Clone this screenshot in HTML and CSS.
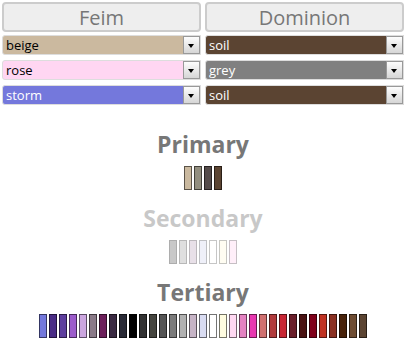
FILE: index.html
```html
<!DOCTYPE html>
<html lang="en">
<head>
  <meta charset="UTF-8">
  <title>Palette</title>
  <link rel="stylesheet" href="styles.css">
</head>
<body>
  <div class="teams">
    <div class="team">
      <button class="team-name">Feim</button>
      <div class="pick beige"><span>beige</span><i class="arrow"></i></div>
      <div class="pick rose"><span>rose</span><i class="arrow"></i></div>
      <div class="pick storm light"><span>storm</span><i class="arrow"></i></div>
    </div>
    <div class="team">
      <button class="team-name">Dominion</button>
      <div class="pick soil light"><span>soil</span><i class="arrow"></i></div>
      <div class="pick grey light"><span>grey</span><i class="arrow"></i></div>
      <div class="pick soil light"><span>soil</span><i class="arrow"></i></div>
    </div>
  </div>

  <div class="group">
    <h2>Primary</h2>
    <div class="swatches">
      <span class="sw" style="background:#cab99f"></span>
      <span class="sw" style="background:#928e7f"></span>
      <span class="sw" style="background:#544b4a"></span>
      <span class="sw" style="background:#5b4432"></span>
    </div>
  </div>

  <div class="group faded">
    <h2>Secondary</h2>
    <div class="swatches">
      <span class="sw" style="background:#777777"></span>
      <span class="sw" style="background:#b1b1b1"></span>
      <span class="sw" style="background:#c6b4c6"></span>
      <span class="sw" style="background:#d9dcf2"></span>
      <span class="sw" style="background:#ffffff"></span>
      <span class="sw" style="background:#fffce0"></span>
      <span class="sw" style="background:#ffd8f2"></span>
    </div>
  </div>

  <div class="group">
    <h2>Tertiary</h2>
    <div class="swatches">
      <span class="sw" style="background:#7478dc"></span>
      <span class="sw" style="background:#4a2c86"></span>
      <span class="sw" style="background:#5e3e9e"></span>
      <span class="sw" style="background:#9c5ccb"></span>
      <span class="sw" style="background:#cba6df"></span>
      <span class="sw" style="background:#8a7a88"></span>
      <span class="sw" style="background:#6c1f5a"></span>
      <span class="sw" style="background:#3a2a42"></span>
      <span class="sw" style="background:#292a36"></span>
      <span class="sw" style="background:#000000"></span>
      <span class="sw" style="background:#323232"></span>
      <span class="sw" style="background:#45453f"></span>
      <span class="sw" style="background:#555555"></span>
      <span class="sw" style="background:#7b7b7b"></span>
      <span class="sw" style="background:#b1b1b1"></span>
      <span class="sw" style="background:#c6b4c6"></span>
      <span class="sw" style="background:#d9dcf2"></span>
      <span class="sw" style="background:#ffffff"></span>
      <span class="sw" style="background:#fffce0"></span>
      <span class="sw" style="background:#ffd8f2"></span>
      <span class="sw" style="background:#e482c2"></span>
      <span class="sw" style="background:#e838b0"></span>
      <span class="sw" style="background:#d07070"></span>
      <span class="sw" style="background:#b13a3c"></span>
      <span class="sw" style="background:#c82634"></span>
      <span class="sw" style="background:#6a1e2a"></span>
      <span class="sw" style="background:#4a1212"></span>
      <span class="sw" style="background:#80001a"></span>
      <span class="sw" style="background:#c03222"></span>
      <span class="sw" style="background:#8a3022"></span>
      <span class="sw" style="background:#48220a"></span>
      <span class="sw" style="background:#6e4c32"></span>
      <span class="sw" style="background:#5b4432"></span>
    </div>
  </div>
</body>
</html>
```

FILE: styles.css
```css
body {
  margin: 0;
  padding: 2px;
  background: #fff;
  font-family: "Open Sans", Arial, sans-serif;
}

.teams {
  display: grid;
  grid-template-columns: 1fr 1fr;
  gap: 4px;
  margin-bottom: 24px;
}

.team {
  display: flex;
  flex-direction: column;
  gap: 5px;
}

.team-name {
  height: 30px;
  margin-bottom: -2px;
  padding: 0;
  background: #eee;
  border: 2px solid #ccc;
  border-radius: 4px;
  font-family: "Open Sans", Arial, sans-serif;
  font-size: 20px;
  color: #777;
}

.pick {
  display: flex;
  align-items: center;
  height: 20px;
  box-sizing: border-box;
  border: 1px solid #ddd;
  border-radius: 3px 0 0 3px;
  font-size: 13px;
  color: #000;
}

.pick span {
  flex: 1;
  padding-left: 3px;
}

.pick.light {
  color: #fff;
}

.arrow {
  position: relative;
  width: 17px;
  height: 18px;
  box-sizing: border-box;
  border: 1px solid #999;
  background: linear-gradient(#fdfdfd, #d6d6d6);
}

.arrow::after {
  content: "";
  position: absolute;
  left: 4px;
  top: 7px;
  border-left: 3.5px solid transparent;
  border-right: 3.5px solid transparent;
  border-top: 4px solid #000;
}

.beige { background: #cbb99f; }
.rose { background: #ffd6f2; }
.storm { background: #7478dc; }
.soil { background: #5b4432; }
.grey { background: #808080; }

.group {
  display: flex;
  flex-direction: column;
  align-items: center;
  height: 74px;
}

.group:nth-child(2) {
  margin-top: 1px;
}

.group h2 {
  margin: 0;
  font-size: 23px;
  line-height: 30px;
  font-weight: 700;
  color: #777;
}

.faded {
  opacity: 0.4;
}

.swatches {
  display: flex;
  gap: 2px;
  margin-top: 7px;
}

.sw {
  width: 8px;
  height: 24px;
  box-sizing: border-box;
  border: 1px solid rgba(0, 0, 0, 0.55);
}
```
